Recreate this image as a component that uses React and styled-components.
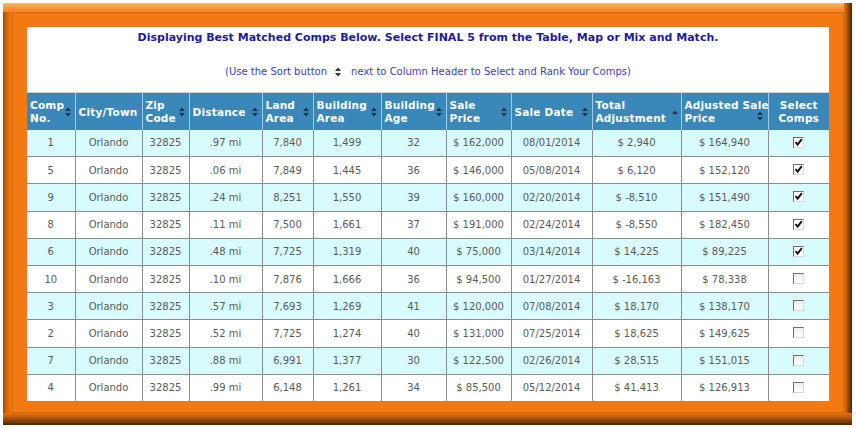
import React from "react";
import styled, { createGlobalStyle } from "styled-components";

const Global = createGlobalStyle`
  html, body { margin: 0; padding: 0; background: #ffffff; }
  body { font-family: "DejaVu Sans", Verdana, sans-serif; }
`;

const Frame = styled.div`
  box-sizing: border-box;
  margin: 3px 0 0 3px;
  width: 849px;
  height: 422px;
  padding: 9px 8px 12px 9px;
  background: #f37a12;
  box-shadow:
    inset 0 -2px 0 #5e2c04,
    inset 0 -4px 0 #7a3a06,
    inset 0 -6px 0 #944608,
    inset 0 -8px 0 #b0540a,
    inset 0 -10px 0 #c9610c,
    inset 0 -12px 0 #de6d0e,
    inset -1px 0 0 #5a2a04,
    inset -2px 0 0 #6a3205,
    inset -3px 0 0 #7c3b06,
    inset -4px 0 0 #904508,
    inset -5px 0 0 #a64f0a,
    inset -6px 0 0 #bb5a0b,
    inset -7px 0 0 #cf640c,
    inset -8px 0 0 #e06e0e,
    inset 0 2px 0 #fbb262,
    inset 0 4px 0 #f9a24c,
    inset 0 6px 0 #f8963c,
    inset 0 9px 0 #f68a2c,
    inset 1px 0 0 #a8500a,
    inset 2px 0 0 #b6570b,
    inset 3px 0 0 #c25d0c,
    inset 4px 0 0 #cd630c,
    inset 5px 0 0 #d8690e,
    inset 6px 0 0 #e06e0f,
    inset 7px 0 0 #e77310,
    inset 8px 0 0 #ec7611,
    inset 9px 0 0 #ef7811;
`;

const FrameInner = styled.div`
  box-sizing: border-box;
  height: 100%;
  border: 1px solid #d6680c;
  padding: 14px 14px 11px 14px;
  background: #f37a12;
`;

const Content = styled.div`
  background: #ffffff;
  height: 100%;
  display: flex;
  flex-direction: column;
  overflow: hidden;
`;

const Intro = styled.div`
  height: 65px;
  flex: none;
  box-sizing: border-box;
  padding-top: 3px;
  text-align: center;
`;

const Title = styled.div`
  font-family: "DejaVu Sans", Verdana, sans-serif;
  font-weight: bold;
  font-size: 11px;
  line-height: 16px;
  color: #1d1d9a;
`;

const Subtitle = styled.div`
  margin-top: 18px;
  font-size: 10px;
  line-height: 16px;
  color: #3e3eb4;
  display: flex;
  justify-content: center;
  align-items: center;
`;

const InlineSort = styled.span`
  display: inline-flex;
  margin: 0 10px 0 8px;
`;

const Table = styled.table`
  width: 802px;
  border-collapse: collapse;
  table-layout: fixed;
  border-top: 1px solid #cfcfcf;
`;

const Th = styled.th`
  position: relative;
  height: 37px;
  box-sizing: border-box;
  background: #3a87b9;
  color: #ffffff;
  font-family: "DejaVu Sans", Verdana, sans-serif;
  font-weight: bold;
  font-size: 10.5px;
  line-height: 13px;
  letter-spacing: 0.2px;
  white-space: nowrap;
  text-align: ${(p) => (p.$center ? "center" : "left")};
  padding: 2px 3px 0 3px;
  border-left: 1px solid #a7cbe4;
  vertical-align: middle;
  &:first-child { border-left: none; }
`;

const SortIcon = styled.svg`
  position: absolute;
  right: ${(p) => p.$right ?? 4}px;
  top: 50%;
  margin-top: ${(p) => p.$dy ?? -4}px;
`;

const Tr = styled.tr`
  height: 27.2px;
  background: ${(p) => (p.$alt ? "#d8fbfe" : "#ffffff")};
`;

const Td = styled.td`
  box-sizing: border-box;
  font-family: "DejaVu Sans", Verdana, sans-serif;
  font-size: 10px;
  color: #5a5a5a;
  text-align: center;
  padding: 0 2px;
  border: 1px solid #8c8c8c;
  border-top: none;
  &:first-child { border-left: none; }
  &:last-child { border-right: none; }
`;

const Box = styled.span`
  display: inline-block;
  vertical-align: middle;
  box-sizing: border-box;
  width: 11px;
  height: 11px;
  border-style: solid;
  border-width: 1px;
  border-color: #6e6e6e #d8d8d8 #d8d8d8 #6e6e6e;
  background: ${(p) => (p.$checked ? "#ffffff" : "linear-gradient(#ececec, #ffffff)")};
  position: relative;
  margin-top: -2px;
`;

const Check = styled.svg`
  position: absolute;
  left: 0;
  top: 0;
`;

function Sort({ up = true, down = true, ...rest }) {
  return (
    <SortIcon width="6" height="10" viewBox="0 0 6 10" {...rest}>
      {up && <polygon points="3,0.5 6,4 0,4" fill="#1c3550" />}
      {down && <polygon points="0,6 6,6 3,9.5" fill="#1c3550" />}
    </SortIcon>
  );
}

const cols = [48, 67, 47, 73, 51, 68, 65, 65, 81, 89, 87, 61];

const headers = [
  { t: ["Comp", "No."] },
  { t: ["City/Town"], noSort: true },
  { t: ["Zip", "Code"] },
  { t: ["Distance"] },
  { t: ["Land", "Area"] },
  { t: ["Building", "Area"] },
  { t: ["Building", "Age"] },
  { t: ["Sale", "Price"] },
  { t: ["Sale Date"] },
  { t: ["Total", "Adjustment"], asc: true },
  { t: ["Adjusted Sale", "Price"], dy: 0, right: 5 },
  { t: ["Select", "Comps"], center: true, noSort: true },
];

const rows = [
  ["1", ".97 mi", "7,840", "1,499", "32", "$ 162,000", "08/01/2014", "$ 2,940", "$ 164,940", true],
  ["5", ".06 mi", "7,849", "1,445", "36", "$ 146,000", "05/08/2014", "$ 6,120", "$ 152,120", true],
  ["9", ".24 mi", "8,251", "1,550", "39", "$ 160,000", "02/20/2014", "$ -8,510", "$ 151,490", true],
  ["8", ".11 mi", "7,500", "1,661", "37", "$ 191,000", "02/24/2014", "$ -8,550", "$ 182,450", true],
  ["6", ".48 mi", "7,725", "1,319", "40", "$ 75,000", "03/14/2014", "$ 14,225", "$ 89,225", true],
  ["10", ".10 mi", "7,876", "1,666", "36", "$ 94,500", "01/27/2014", "$ -16,163", "$ 78,338", false],
  ["3", ".57 mi", "7,693", "1,269", "41", "$ 120,000", "07/08/2014", "$ 18,170", "$ 138,170", false],
  ["2", ".52 mi", "7,725", "1,274", "40", "$ 131,000", "07/25/2014", "$ 18,625", "$ 149,625", false],
  ["7", ".88 mi", "6,991", "1,377", "30", "$ 122,500", "02/26/2014", "$ 28,515", "$ 151,015", false],
  ["4", ".99 mi", "6,148", "1,261", "34", "$ 85,500", "05/12/2014", "$ 41,413", "$ 126,913", false],
];

function Checkbox({ checked }) {
  return (
    <Box $checked={checked}>
      {checked && (
        <Check width="9" height="9" viewBox="0 0 9 9">
          <path d="M1.5 4 L3.6 6.6 L7.8 1.2" stroke="#111" strokeWidth="1.9" fill="none" />
        </Check>
      )}
    </Box>
  );
}

export default function App() {
  return (
    <>
      <Global />
      <Frame>
        <FrameInner>
          <Content>
            <Intro>
              <Title>
                Displaying Best Matched Comps Below. Select FINAL 5 from the Table, Map or Mix and Match.
              </Title>
              <Subtitle>
                (Use the Sort button
                <InlineSort>
                  <svg width="6" height="10" viewBox="0 0 6 10">
                    <polygon points="3,0.5 6,4 0,4" fill="#333" />
                    <polygon points="0,6 6,6 3,9.5" fill="#333" />
                  </svg>
                </InlineSort>
                next to Column Header to Select and Rank Your Comps)
              </Subtitle>
            </Intro>
            <Table>
              <colgroup>
                {cols.map((w, i) => (
                  <col key={i} style={{ width: w }} />
                ))}
              </colgroup>
              <thead>
                <tr>
                  {headers.map((h, i) => (
                    <Th key={i} $center={h.center}>
                      {h.t.map((line, j) => (
                        <React.Fragment key={j}>
                          {j > 0 && <br />}
                          {line}
                        </React.Fragment>
                      ))}
                      {!h.noSort &&
                        (h.asc ? (
                          <Sort down={false} $dy={-1} $right={3} />
                        ) : (
                          <Sort $dy={h.dy} $right={h.right} />
                        ))}
                    </Th>
                  ))}
                </tr>
              </thead>
              <tbody>
                {rows.map((r, i) => (
                  <Tr key={i} $alt={i % 2 === 0}>
                    <Td>{r[0]}</Td>
                    <Td>Orlando</Td>
                    <Td>32825</Td>
                    <Td>{r[1]}</Td>
                    <Td>{r[2]}</Td>
                    <Td>{r[3]}</Td>
                    <Td>{r[4]}</Td>
                    <Td>{r[5]}</Td>
                    <Td>{r[6]}</Td>
                    <Td>{r[7]}</Td>
                    <Td>{r[8]}</Td>
                    <Td>
                      <Checkbox checked={r[9]} />
                    </Td>
                  </Tr>
                ))}
              </tbody>
            </Table>
          </Content>
        </FrameInner>
      </Frame>
    </>
  );
}
